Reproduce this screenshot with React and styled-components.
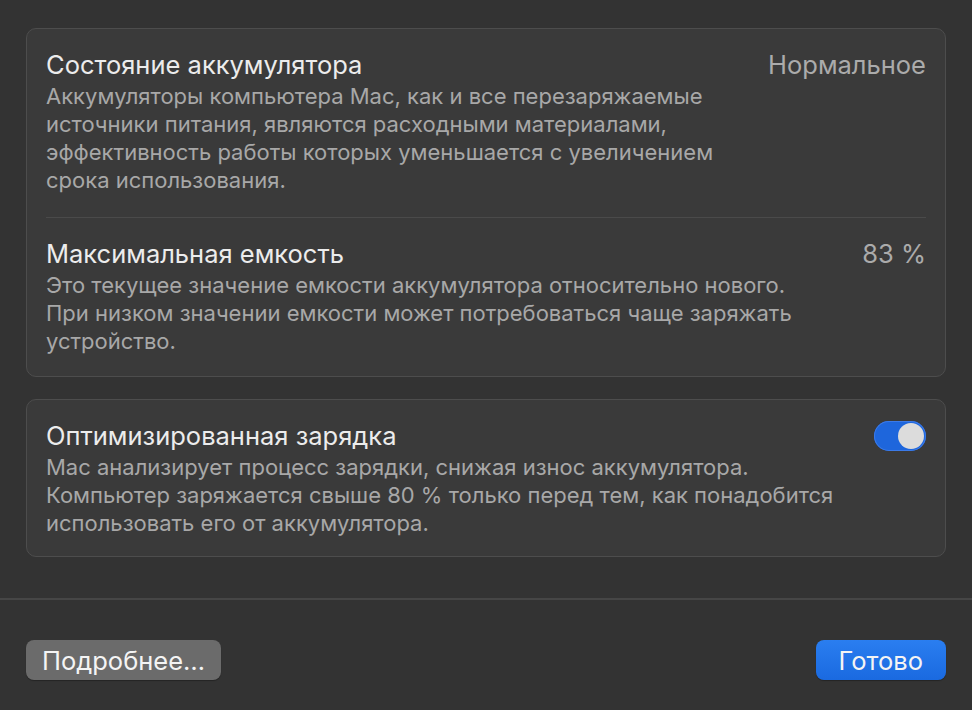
import React from 'react';
import styled, { createGlobalStyle } from 'styled-components';

const Global = createGlobalStyle`
    html, body {
        margin: 0;
        padding: 0;
        background: #333333;
    }
    body {
        font-family: Inter, "Liberation Sans", sans-serif;
        -webkit-font-smoothing: antialiased;
    }
`

const App = () => {
    return (
        <>
            <Global />
            <Page>
                <Content>
                    <Card>
                        <Item>
                            <ItemHead>
                                <Title>Состояние аккумулятора</Title>
                                <Value>Нормальное</Value>
                            </ItemHead>
                            <Desc>
                                Аккумуляторы компьютера Mac, как и все перезаряжаемые<br />
                                источники питания, являются расходными материалами,<br />
                                эффективность работы которых уменьшается с увеличением<br />
                                срока использования.
                            </Desc>
                        </Item>
                        <Divider />
                        <Item>
                            <ItemHead>
                                <Title>Максимальная емкость</Title>
                                <Value>83 %</Value>
                            </ItemHead>
                            <Desc>
                                Это текущее значение емкости аккумулятора относительно нового.<br />
                                При низком значении емкости может потребоваться чаще заряжать<br />
                                устройство.
                            </Desc>
                        </Item>
                    </Card>
                    <Card>
                        <Item last>
                            <ItemHead>
                                <Title>Оптимизированная зарядка</Title>
                                <Toggle aria-label='toggle'><Knob /></Toggle>
                            </ItemHead>
                            <Desc>
                                Mac анализирует процесс зарядки, снижая износ аккумулятора.<br />
                                Компьютер заряжается свыше 80 % только перед тем, как понадобится<br />
                                использовать его от аккумулятора.
                            </Desc>
                        </Item>
                    </Card>
                </Content>
                <Footer>
                    <Button>Подробнее…</Button>
                    <Button primary>Готово</Button>
                </Footer>
            </Page>
        </>
    );
}

export default App;

const Page = styled.div`
    width: 972px;
    height: 710px;
    display: flex;
    flex-direction: column;
    overflow: hidden;
`
const Content = styled.div`
    display: flex;
    flex-direction: column;
    gap: 22px;
    padding: 28px 26px 41px 26px;
    border-bottom: 2px solid #464646;
`
const Card = styled.div`
    background: #3a3a3a;
    border: 1px solid #4d4d4d;
    border-radius: 10px;
    padding: 0 19px;
`
const Item = styled.div`
    padding: 21px 0 ${p => (p.last ? '19px' : '21px')};
`
const ItemHead = styled.div`
    display: flex;
    justify-content: space-between;
    align-items: center;
    height: 30px;
`
const Title = styled.div`
    font-size: 25.5px;
    line-height: 30px;
    color: #ececec;
`
const Value = styled.div`
    font-size: 25.5px;
    line-height: 30px;
    color: #ababab;
`
const Desc = styled.div`
    margin-top: 2px;
    font-size: 22px;
    line-height: 28px;
    color: #a8a8a8;
    white-space: nowrap;
`
const Divider = styled.div`
    height: 1px;
    margin-top: 2px;
    background: #4a4a4a;
`
const Toggle = styled.div`
    width: 52px;
    height: 30px;
    border-radius: 15px;
    background: #1e66dc;
    box-shadow: inset 0 0 0 1px #3b7ae8;
    display: flex;
    align-items: center;
    justify-content: flex-end;
    padding: 0 2px;
    box-sizing: border-box;
`
const Knob = styled.div`
    width: 26px;
    height: 26px;
    border-radius: 50%;
    background: #dcdcdc;
`
const Footer = styled.div`
    display: flex;
    justify-content: space-between;
    padding: 40px 26px 0 26px;
`
const Button = styled.button`
    height: 40px;
    padding: 0 ${p => (p.primary ? '23px' : '16px')};
    border: none;
    border-radius: 8px;
    font-family: Inter, "Liberation Sans", sans-serif;
    font-size: 25.5px;
    color: #f4f4f4;
    background: ${p => (p.primary ? 'linear-gradient(#2a7ef0, #1a6ae0)' : '#6b6b6b')};
    box-shadow: 0 1px 1px rgba(0,0,0,0.3);
`
